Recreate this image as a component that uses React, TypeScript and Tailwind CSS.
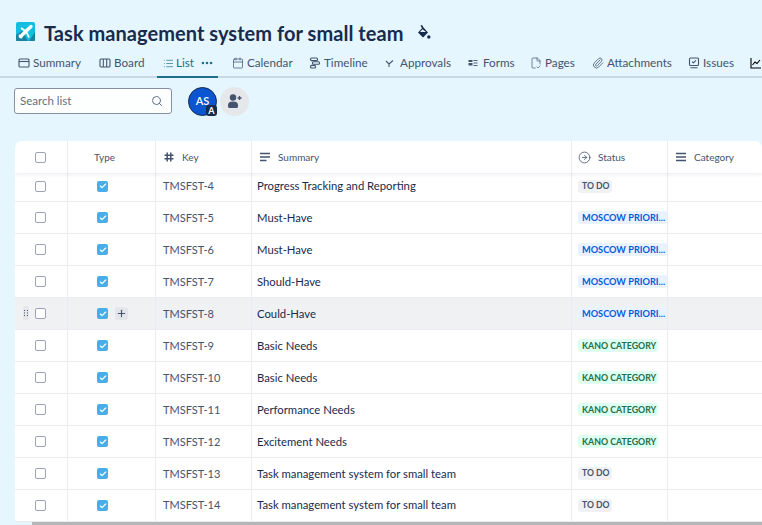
import React from "react";
import { Search, Plus, CircleArrowRight, Check, List, Calendar, Paperclip, FileCheck2, Ellipsis } from "lucide-react";

const font = "font-['Lato','Open_Sans',sans-serif]";

type Tone = "todo" | "blue" | "green";
const rows: { key: string; summary: string; tone: Tone; first?: boolean; hover?: boolean; last?: boolean }[] = [
  { key: "TMSFST-4", summary: "Progress Tracking and Reporting", tone: "todo", first: true },
  { key: "TMSFST-5", summary: "Must-Have", tone: "blue" },
  { key: "TMSFST-6", summary: "Must-Have", tone: "blue" },
  { key: "TMSFST-7", summary: "Should-Have", tone: "blue" },
  { key: "TMSFST-8", summary: "Could-Have", tone: "blue", hover: true },
  { key: "TMSFST-9", summary: "Basic Needs", tone: "green" },
  { key: "TMSFST-10", summary: "Basic Needs", tone: "green" },
  { key: "TMSFST-11", summary: "Performance Needs", tone: "green" },
  { key: "TMSFST-12", summary: "Excitement Needs", tone: "green" },
  { key: "TMSFST-13", summary: "Task management system for small team", tone: "todo" },
  { key: "TMSFST-14", summary: "Task management system for small team", tone: "todo", last: true },
];

function Tab({ icon, label, active, w, iw = "w-[15px]" }: { icon: React.ReactNode; label: string; active?: boolean; w: string; iw?: string }) {
  return (
    <div className={`flex items-center h-[26px] shrink-0 text-[11.7px] whitespace-nowrap ${active ? "text-[#1d6f8a]" : "text-[#44546f]"} ${w}`}>
      <span className={`${iw} shrink-0 flex items-center`}>{icon}</span>
      <span>{label}</span>
    </div>
  );
}

const I = ({ children }: { children: React.ReactNode }) => (
  <svg width="12" height="12" viewBox="0 0 12 12" fill="none" stroke="currentColor" strokeWidth="1.1" className="shrink-0">{children}</svg>
);

function Box() {
  return <div className="w-[11px] h-[11px] rounded-[2px] border border-[#9aa2b4] bg-white" />;
}

function Lozenge({ tone }: { tone: Tone }) {
  const base = "inline-block h-[13px] leading-[13px] rounded-[3px] font-bold whitespace-nowrap overflow-hidden";
  if (tone === "todo") return <span className={`${base} text-[8.6px] w-[34px] pl-[4px] bg-[#f0f1f4] text-[#44546f]`}>TO DO</span>;
  if (tone === "blue") return <span className={`${base} text-[9.2px] w-[89px] pl-[4px] bg-[#e9f2ff] text-[#0c5ad6]`}>MOSCOW PRIORI...</span>;
  return <span className={`${base} text-[8.8px] w-[80px] pl-[4px] bg-[#dcfff1] text-[#216e4e]`}>KANO CATEGORY</span>;
}

const cols = "grid grid-cols-[53px_88px_96px_320px_96px_94px]";
const line = "border-r border-[#ebecf0]";

export default function App() {
  return (
    <div className={`${font} w-[762px] h-[525px] overflow-hidden bg-[#e5f6ff] relative`}>
      <div className="flex items-center h-[24px] mt-[21px] pl-[16px]">
        <svg width="19" height="19" viewBox="0 0 19 19" className="shrink-0 -mt-[4px]">
          <rect width="19" height="19" rx="2" fill="#12bfe0" />
          <path d="M0 19 V13 L6 9 L12 19Z" fill="#1d6f8a" opacity="0.75" />
          <path d="M13 19 L19 10 V19Z" fill="#1d6f8a" opacity="0.75" />
          <path d="M4.500 14.500 L15 4.500" stroke="#fff" strokeWidth="3.4" strokeLinecap="round" />
          <path d="M5 6 L10 9.500 M10.500 10 L13 15.500 M3 13 L6 16" stroke="#fff" strokeWidth="1.8" />
        </svg>
        <h1 className="ml-[9px] text-[20px] font-bold leading-[24px] tracking-[0.05px] text-[#172b4d] whitespace-nowrap">Task management system for small team</h1>
        <svg width="14" height="15" viewBox="0 0 14 15" className="ml-[14px] text-[#172b4d] -mt-[2px]" fill="currentColor">
          <path d="M3.500 0.500 L5 0 L6.500 2.500 L11 7.500 L6 12.500 L1 7.500 L5 3.200Z M5.500 4.200 L3 7 H9Z" fillRule="evenodd" />
          <circle cx="11.800" cy="12" r="1.700" />
        </svg>
      </div>

      <div className="relative mt-[5px] h-[26px] border-b-2 border-[#c6d9e4] box-content">
        <div className="flex items-center pl-[18px] h-[26px] w-[800px]">
          <Tab w="w-[81px]" label="Summary" icon={<I><rect x="1" y="2" width="10" height="8" rx="1" /><path d="M1 4.500h10" /></I>} />
          <Tab w="w-[64px]" label="Board" icon={<I><rect x="1" y="2" width="10" height="8" rx="1" /><path d="M4.300 2v8M7.700 2v8" /></I>} />
          <div className="flex items-center w-[69px] shrink-0 text-[#1d6f8a]">
            <Tab w="w-[37px]" iw="w-[13px]" active label="List" icon={<List size={11} strokeWidth={1.5} />} />
            <Ellipsis size={14} strokeWidth={2.5} />
          </div>
          <Tab w="w-[77px]" label="Calendar" icon={<Calendar size={12} strokeWidth={1.5} />} />
          <Tab w="w-[76px]" label="Timeline" icon={<I><rect x="1.500" y="1" width="7" height="2.600" rx="1" /><rect x="3.500" y="4.700" width="7" height="2.600" rx="1" /><rect x="1.500" y="8.400" width="5" height="2.600" rx="1" /></I>} />
          <Tab w="w-[83px]" label="Approvals" icon={<svg width="9" height="9" viewBox="0 0 9 9" fill="none" stroke="currentColor" strokeWidth="1.100"><path d="M1 2 L4 5 V8 M4 5 L8 1.500" /></svg>} />
          <Tab w="w-[62px]" label="Forms" icon={<svg width="10" height="10" viewBox="0 0 10 10" fill="currentColor"><rect x="0.500" y="2" width="4" height="2" /><rect x="0.500" y="5" width="4" height="2.500" /><path d="M5.500 2.500h4M5.500 5h4M5.500 7.500h4" stroke="currentColor" strokeWidth="0.900" /></svg>} />
          <Tab w="w-[62px]" label="Pages" icon={<FileCheck2 size={12} strokeWidth={1.4} />} />
          <Tab w="w-[96px]" label="Attachments" icon={<Paperclip size={12} strokeWidth={1.6} />} />
          <Tab w="w-[62px]" label="Issues" icon={<I><rect x="1.500" y="1" width="9" height="7.500" rx="1" /><path d="M4 4.800l1.500 1 2.500-2.500M2.500 10.800h7" /></I>} />
          <I><path d="M1 1v10h10M2.500 8l2.500-3 2 1.500L10 3" /></I>
        </div>
        <div className="absolute left-[157px] bottom-[-2px] w-[61px] h-[2px] bg-[#1d6f8a]" />
      </div>

      <div className="flex items-center mt-[9px] pl-[14px] h-[28px]">
        <div className="flex items-center justify-between w-[158px] h-[26px] rounded-[3px] border border-[#8590a2] bg-[#fdffff] pl-[5px] pr-[8px] text-[11.500px] text-[#626f86]">
          <span>Search list</span>
          <Search size={12} className="text-[#626f86]" />
        </div>
        <div className="relative ml-[16px] w-[29px] h-[29px] rounded-full bg-[#0b55d0] border-[1.5px] border-[#172b4d] flex items-center justify-center text-white text-[11px] font-semibold">
          AS
          <span className="absolute -right-[1px] -bottom-[1px] w-[11px] h-[11px] rounded-[3px] bg-[#172b4d] text-[9px] font-bold leading-[11px] text-center">A</span>
        </div>
        <div className="ml-[3px] w-[29px] h-[29px] rounded-full bg-[#e6e7ea] flex items-center justify-center text-[#44546f]">
          <svg width="15" height="15" viewBox="0 0 15 15" fill="currentColor">
            <circle cx="6" cy="3.500" r="3.200" />
            <path d="M1 11 C1 8.500 3 7.500 6 7.500 C9 7.500 11 8.500 11 11 V12.500 C11 13.500 10 14 9 14 H3 C2 14 1 13.500 1 12.500Z" />
            <path d="M10.500 4h4M12.500 2v4" stroke="currentColor" strokeWidth="1.400" />
          </svg>
        </div>
      </div>

      <div className="mt-[26px] ml-[15px] bg-white rounded-t-[7px] overflow-hidden h-[381px]">
        <div className={`${cols} h-[32px] items-stretch text-[10px] text-[#44546f] shadow-[0_1px_4px_rgba(9,30,66,0.10)] relative z-10 bg-white`}>
          <div className={`flex items-center justify-center pr-[2px] ${line}`}><Box /></div>
          <div className={`flex items-center pl-[26px] ${line}`}>Type</div>
          <div className={`flex items-center pl-[8px] gap-[8px] ${line}`}>
            <svg width="10" height="10" viewBox="0 0 10 10" stroke="currentColor" strokeWidth="1.500"><path d="M3.200 0.500V9.500M6.800 0.500V9.500M0.500 3.200H9.500M0.500 6.800H9.500" /></svg>
            <span>Key</span>
          </div>
          <div className={`flex items-center pl-[8px] gap-[8px] ${line}`}>
            <svg width="10" height="10" viewBox="0 0 10 10" stroke="currentColor" strokeWidth="1.300"><path d="M0 1.500H10M0 5H10M0 8.500H6.500" /></svg>
            <span>Summary</span>
          </div>
          <div className={`flex items-center pl-[6px] gap-[7px] ${line}`}><CircleArrowRight size={13} strokeWidth={1.500} /><span>Status</span></div>
          <div className="flex items-center pl-[8px] gap-[8px]">
            <svg width="10" height="10" viewBox="0 0 10 10" stroke="currentColor" strokeWidth="1.300"><path d="M0 1.500H10M0 5H10M0 8.500H10" /></svg>
            <span>Category</span>
          </div>
        </div>
        {rows.map((r) => {
          const textShift = r.first ? "pb-[1px]" : r.last ? "" : "pt-[2px]";
          return (
            <div key={r.key} className={`${cols} ${r.first ? "h-[29px]" : "h-[32px]"} border-b border-[#ebecf0] box-border ${r.hover ? "bg-[#f0f1f3]" : "bg-white"} text-[#44546f]`}>
              <div className={`relative flex items-center justify-center pr-[2px] ${r.first ? "pb-[2px]" : ""} ${line}`}>
                {r.hover && (
                  <div className="absolute left-[8px] top-[8px] w-[6px] h-[14px] rounded-[2px] bg-[#e4e6ea] flex items-center justify-center">
                    <svg width="4" height="6" viewBox="0 0 4 6" fill="currentColor"><rect x="0" y="0" width="1" height="1" /><rect x="3" y="0" width="1" height="1" /><rect x="0" y="2.500" width="1" height="1" /><rect x="3" y="2.500" width="1" height="1" /><rect x="0" y="5" width="1" height="1" /><rect x="3" y="5" width="1" height="1" /></svg>
                  </div>
                )}
                <Box />
              </div>
              <div className={`relative flex items-center pl-[29px] ${r.first ? "pb-[2px]" : ""} ${line}`}>
                <div className="w-[11px] h-[11px] rounded-[2px] bg-[#4bade8] flex items-center justify-center text-white"><Check size={8} strokeWidth={3.500} /></div>
                {r.hover && <div className="absolute left-[47px] top-[9px] w-[13px] h-[13px] rounded-[3px] bg-[#e4e6ea] flex items-center justify-center"><Plus size={11} strokeWidth={2.400} /></div>}
              </div>
              <div className={`flex items-center pl-[7px] text-[11px] ${textShift} ${line}`}>{r.key}</div>
              <div className={`flex items-center pl-[5px] text-[11.300px] text-[#172b4d] whitespace-nowrap ${textShift} ${line}`}>{r.summary}</div>
              <div className={`flex items-center pl-[6px] ${r.first ? "pb-[2px]" : ""} ${line}`}><Lozenge tone={r.tone} /></div>
              <div />
            </div>
          );
        })}
      </div>
      <div className="absolute left-[32px] right-0 bottom-0 h-[3px] bg-[#b4b5b7]" />
    </div>
  );
}
